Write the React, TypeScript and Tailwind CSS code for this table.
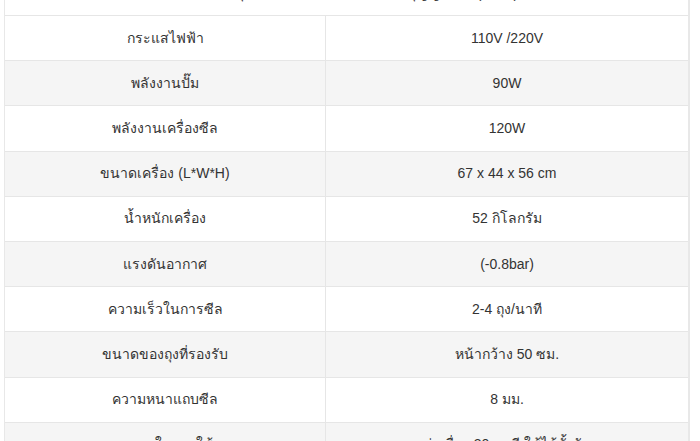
import React from "react";

const rows: [string, string][] = [
  ["กระแสไฟฟ้า", "110V /220V"],
  ["พลังงานปั๊ม", "90W"],
  ["พลังงานเครื่องซีล", "120W"],
  ["ขนาดเครื่อง (L*W*H)", "67 x 44 x 56 cm"],
  ["น้ำหนักเครื่อง", "52 กิโลกรัม"],
  ["แรงดันอากาศ", "(-0.8bar)"],
  ["ความเร็วในการซีล", "2-4 ถุง/นาที"],
  ["ขนาดของถุงที่รองรับ", "หน้ากว้าง 50 ซม."],
  ["ความหนาแถบซีล", "8 มม."],
  ["ระยะเวลาในการใช้งาน", "ต่อเนื่อง 30 นาที ใช้ได้ทั้งวัน"],
];

export default function App() {
  return (
    <div
      className="w-[700px] h-[441px] overflow-hidden bg-white text-[#333333] text-[14px]"
      style={{ fontFamily: '"Liberation Sans", Arial, sans-serif' }}
    >
      <div className="ml-[4px] w-[686px] mt-[-29px] border-l border-r-2 border-[#e8e8e8] flex flex-col">
        <div className="h-[45px] flex items-center justify-center border-b border-[#e6e6e6] bg-white">
          <span className="pl-[60px]">คุณสมบัติทั่วไปของเครื่องซีลสุญญากาศ (สเปค)</span>
        </div>
        {rows.map(([k, v], i) => (
          <div
            key={i}
            className={
              "h-[45.2px] shrink-0 flex border-b border-[#e6e6e6] " +
              (i % 2 === 1 ? "bg-[#f5f5f5]" : "bg-white")
            }
          >
            <div className="w-[321px] shrink-0 border-r border-[#e6e6e6] flex items-center justify-center">
              {k}
            </div>
            <div className="flex-1 flex items-center justify-center">{v}</div>
          </div>
        ))}
      </div>
    </div>
  );
}
